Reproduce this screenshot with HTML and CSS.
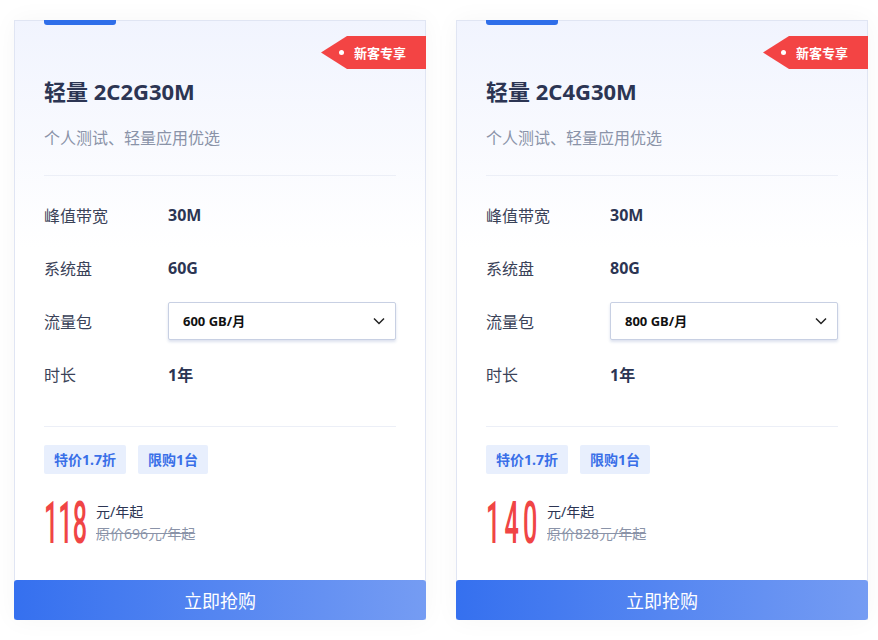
FILE: index.html
```html
<!DOCTYPE html>
<html>
<head>
  <meta charset="utf-8">
  <title>轻量服务器 新客专享</title>
  <link rel="stylesheet" href="styles.css">
</head>
<body>
  <div class="plans">
    <div class="card">
      <div class="top-bar"></div>
      <div class="badge"><span class="dot"></span>新客专享</div>
      <div class="card-body">
        <h2 class="title">轻量 2C2G30M</h2>
        <p class="desc">个人测试、轻量应用优选</p>
        <div class="line"></div>
        <div class="specs">
          <div class="row"><span class="label">峰值带宽</span><span class="value">30M</span></div>
          <div class="row"><span class="label">系统盘</span><span class="value">60G</span></div>
          <div class="row">
            <span class="label">流量包</span>
            <div class="select">
              <span>600 GB/月</span>
              <svg width="12" height="8" viewBox="0 0 12 8"><path d="M1 1.5l5 5 5-5" fill="none" stroke="#222" stroke-width="1.5"/></svg>
            </div>
          </div>
          <div class="row"><span class="label">时长</span><span class="value">1年</span></div>
        </div>
        <div class="line line-bottom"></div>
        <div class="tags">
          <span class="tag">特价1.7折</span>
          <span class="tag">限购1台</span>
        </div>
        <div class="price">
          <div class="num"><span>118</span></div>
          <div class="price-text">
            <div class="unit">元/年起</div>
            <div class="orig">原价696元/年起</div>
          </div>
        </div>
      </div>
      <button class="buy">立即抢购</button>
    </div>

    <div class="card">
      <div class="top-bar"></div>
      <div class="badge"><span class="dot"></span>新客专享</div>
      <div class="card-body">
        <h2 class="title">轻量 2C4G30M</h2>
        <p class="desc">个人测试、轻量应用优选</p>
        <div class="line"></div>
        <div class="specs">
          <div class="row"><span class="label">峰值带宽</span><span class="value">30M</span></div>
          <div class="row"><span class="label">系统盘</span><span class="value">80G</span></div>
          <div class="row">
            <span class="label">流量包</span>
            <div class="select">
              <span>800 GB/月</span>
              <svg width="12" height="8" viewBox="0 0 12 8"><path d="M1 1.5l5 5 5-5" fill="none" stroke="#222" stroke-width="1.5"/></svg>
            </div>
          </div>
          <div class="row"><span class="label">时长</span><span class="value">1年</span></div>
        </div>
        <div class="line line-bottom"></div>
        <div class="tags">
          <span class="tag">特价1.7折</span>
          <span class="tag">限购1台</span>
        </div>
        <div class="price">
          <div class="num num-wide"><span>140</span></div>
          <div class="price-text">
            <div class="unit">元/年起</div>
            <div class="orig">原价828元/年起</div>
          </div>
        </div>
      </div>
      <button class="buy">立即抢购</button>
    </div>
  </div>
</body>
</html>
```

FILE: styles.css
```css
body {
  margin: 0;
  background: #fff;
  font-family: "Noto Sans", "Noto Sans CJK SC", sans-serif;
  color: #2c3553;
}
.plans {
  display: flex;
  gap: 30px;
  padding: 20px 14px;
}
.card {
  position: relative;
  width: 410px;
  height: 599px;
  border: 1px solid #e0e5f3;
  border-bottom: none;
  background: linear-gradient(180deg, #f1f4fe 0%, #ffffff 38%);
  box-shadow: 0 0 24px rgba(0,0,0,0.04);
  display: flex;
  flex-direction: column;
}
.top-bar {
  position: absolute;
  left: 29px;
  top: -1px;
  width: 72px;
  height: 5px;
  background: #2f6ee9;
  border-radius: 0 0 3px 3px;
}
.badge {
  position: absolute;
  top: 15px;
  right: -1px;
  width: 78px;
  height: 33px;
  padding-left: 27px;
  background: #f34444;
  color: #fff;
  font-size: 13px;
  font-weight: 700;
  display: flex;
  align-items: center;
  clip-path: polygon(0 50%, 26px 0, 100% 0, 100% 100%, 26px 100%);
}
.badge .dot {
  width: 5px;
  height: 5px;
  border-radius: 50%;
  background: #fff;
  margin: 0 10px 0 -9px;
}
.card-body {
  flex: 1;
  padding: 54px 29px 0 29px;
}
.title {
  margin: 0;
  font-size: 22px;
  line-height: 32px;
  font-weight: 700;
  color: #2c3553;
}
.desc {
  margin: 19px 0 0;
  font-size: 16px;
  line-height: 24px;
  color: #8a93a8;
}
.line {
  height: 1px;
  background: #eceff7;
  margin-top: 25px;
}
.specs {
  margin-top: 12px;
}
.row {
  height: 53px;
  display: flex;
  align-items: center;
}
.label {
  width: 124px;
  flex-shrink: 0;
  font-size: 16px;
  color: #3a4258;
}
.value {
  font-size: 16px;
  font-weight: 700;
  color: #2c3553;
}
.select {
  box-sizing: border-box;
  width: 229px;
  height: 38px;
  border: 1px solid #c8d0e3;
  border-radius: 2px;
  background: #fff;
  box-shadow: 0 2px 3px rgba(60,90,160,0.18);
  display: flex;
  align-items: center;
  justify-content: space-between;
  padding: 0 10px 0 14px;
  font-size: 13px;
  font-weight: 700;
  color: #111;
}
.line-bottom {
  margin-top: 26px;
}
.tags {
  margin-top: 18px;
  display: flex;
  gap: 12px;
}
.tag {
  height: 29px;
  line-height: 29px;
  padding: 0 10px;
  background: #e8effd;
  border-radius: 2px;
  color: #3a6fe8;
  font-size: 14px;
  font-weight: 700;
}
.price {
  margin-top: 24px;
  display: flex;
  align-items: center;
}
.num {
  width: 43px;
  height: 50px;
  margin-right: 9px;
}
.num-wide {
  width: 52px;
}
.num span {
  display: inline-block;
  font-family: Roboto, "Liberation Sans", sans-serif;
  font-size: 60px;
  font-weight: 500;
  line-height: 50px;
  color: #f04545;
  transform: scaleX(0.42);
  transform-origin: left;
  white-space: nowrap;
}
.num-wide span {
  letter-spacing: 10px;
}
.price-text {
  font-size: 14px;
  line-height: 22px;
}
.unit {
  color: #2c3553;
}
.orig {
  color: #8a93a8;
  text-decoration: line-through;
}
.buy {
  height: 40px;
  margin: 0 -1px;
  border: none;
  border-radius: 3px;
  background: linear-gradient(90deg, #3570ef 0%, #759cf3 100%);
  color: #fff;
  font-family: "Noto Sans", "Noto Sans CJK SC", sans-serif;
  font-size: 18px;
  cursor: pointer;
}
```
